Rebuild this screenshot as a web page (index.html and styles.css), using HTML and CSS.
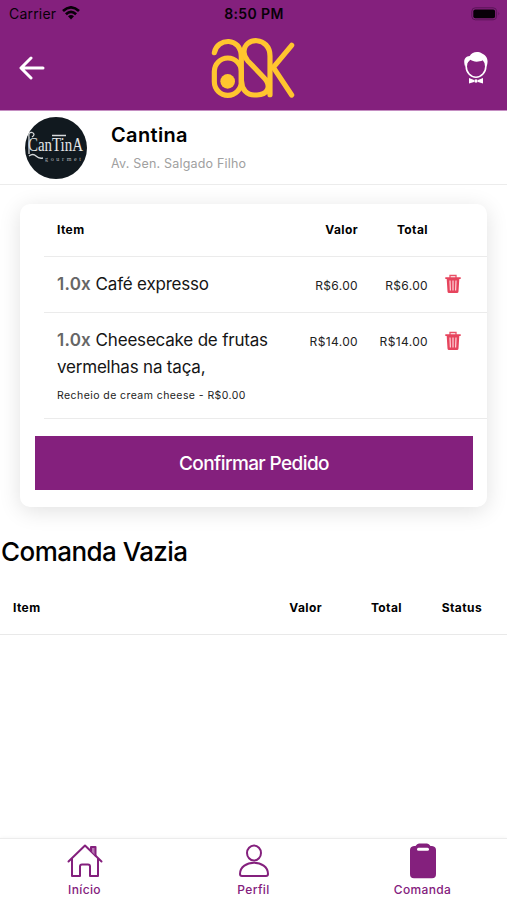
FILE: index.html
```html
<!DOCTYPE html>
<html lang="pt-BR">
<head>
<meta charset="utf-8">
<title>Comanda</title>
<link rel="stylesheet" href="styles.css">
</head>
<body>
<header class="top">
  <div class="status">
    <div class="carrier"><span class="carrier-name">Carrier</span>
      <svg class="wifi" width="18" height="14" viewBox="0 0 18 14"><g fill="none" stroke="#080008" stroke-width="2.7"><path d="M1 5.1Q9-2.3 17 5.1"/><path d="M3.9 8.2Q9 3.500 14.100 8.200"/></g><path d="M6 10.300Q9 7.800 12 10.300L9 13.500Z" fill="#080008"/></svg>
    </div>
    <span class="clock">8:50 PM</span>
    <svg class="battery" width="30" height="14" viewBox="0 0 30 14"><rect x=".8" y=".8" width="24.8" height="12" rx="3.5" fill="none" stroke="#5b1558"/><rect x="2.3" y="2.4" width="21.8" height="8.8" rx="2" fill="#080008"/><path d="M27.5 4.8Q29.2 6.700 27.500 8.600Z" fill="#5b1558"/></svg>
  </div>
  <div class="bar">
    <svg class="back" width="26" height="24" viewBox="0 0 26 24"><path d="M12 2 2 12 12 22M2.500 12H24" fill="none" stroke="#fff" stroke-width="3" stroke-linecap="round" stroke-linejoin="round"/></svg>
    <svg class="logo" width="110" height="75" viewBox="0 0 330 225"><g fill="none" stroke="#ffc52f" stroke-width="15.500" stroke-linecap="round"><path d="M46 68C54 24 127 18 127 82V155"/><rect x="46" y="84" width="81" height="112" rx="40.500"/><path d="M213 194V78C213 19 135 19 135 66C135 78 139 84 146 92L195 143C220 170 204 195 174 195H166C144 195 128 178 128 155"/><path d="M278 46 223 112 278 195" stroke-linejoin="round"/></g><circle cx="86" cy="154" r="22" fill="#ffc52f"/></svg>
    <svg class="waiter" width="26" height="34" viewBox="0 0 26 34"><ellipse cx="13" cy="15.500" rx="9.800" ry="10.700" fill="none" stroke="#fff" stroke-width="1.600"/><path d="M2.200 16C-.2 9 2 5.300 6.700 5 9 .6 15 0 19 2.400 25.200 5 25.500 11 23.400 16 22.700 12 21 10.500 20 9.300 14 11.800 10 10.500 7.500 8.800 4.800 10.800 3.300 13 2.200 16Z" fill="#fff"/><path d="M6 27 11 29V31L6 32.500ZM20 27 15 29V31L20 32.500Z" fill="#fff"/><circle cx="13" cy="30" r="1.800" fill="#fff"/></svg>
  </div>
</header>

<section class="place">
  <svg class="avatar" width="62" height="62" viewBox="0 0 62 62"><circle cx="31" cy="31" r="31" fill="#11191f"/><g fill="#e4e6e7" font-family="Liberation Serif, serif"><text x="3" y="34" font-size="19" textLength="55" lengthAdjust="spacingAndGlyphs">CanTinA</text><text x="20" y="43.500" font-size="6" textLength="36" lengthAdjust="spacing" fill="#b5b9bc">gourmet</text></g><path d="M4 39Q8 36 11 39T18 41M27 18.500H41M4 20Q3 15 7 15.500 11 17 7 20M4 20V37" fill="none" stroke="#d5d8da" stroke-width="1.300"/></svg>
  <div class="place-info">
    <h1 class="place-name">Cantina</h1>
    <p class="place-address">Av. Sen. Salgado Filho</p>
  </div>
</section>

<main>
  <section class="card">
    <div class="row head"><span>Item</span><span class="num">Valor</span><span class="num">Total</span></div>
    <div class="row first">
      <div class="name"><b>1.0x</b> Café expresso</div><span class="num">R$6.00</span><span class="num">R$6.00</span>
      <svg class="trash" width="16" height="20" viewBox="0 0 16 20"><path d="M5 4V1.500H11V4" fill="none" stroke="#e95166" stroke-width="1.300"/><path d="M.3 3.300H15.700V5H14.300L13.500 17.500Q13.400 19 12 19H4Q2.600 19 2.500 17.500L1.700 5H.3Z" fill="#e6445d"/><path d="M5 6.500 5.400 16.500M8 6.500V16.500M11 6.500 10.600 16.500" stroke="#ffd5da" stroke-width="1.200"/></svg>
    </div>
    <div class="row second">
      <div class="name"><b>1.0x</b> Cheesecake de frutas<br>vermelhas na taça,<small class="extra">Recheio de cream cheese - R$0.00</small></div><span class="num">R$14.00</span><span class="num">R$14.00</span>
      <svg class="trash" width="16" height="20" viewBox="0 0 16 20"><path d="M5 4V1.500H11V4" fill="none" stroke="#e95166" stroke-width="1.300"/><path d="M.3 3.300H15.700V5H14.300L13.500 17.500Q13.400 19 12 19H4Q2.600 19 2.500 17.500L1.700 5H.3Z" fill="#e6445d"/><path d="M5 6.500 5.400 16.500M8 6.500V16.500M11 6.500 10.600 16.500" stroke="#ffd5da" stroke-width="1.200"/></svg>
    </div>
    <button class="confirm">Confirmar Pedido</button>
  </section>
  <h2 class="title">Comanda Vazia</h2>
  <div class="tab-head"><span>Item</span><span class="num">Valor</span><span class="num">Total</span><span class="num">Status</span></div>
</main>

<nav class="nav">
  <a class="tab"><svg width="36" height="36" viewBox="0 0 36 36"><g fill="none" stroke="#84207d" stroke-width="2" stroke-linejoin="round" stroke-linecap="round"><path d="M1.500 18.500 18 2.500 34.500 18.500M5 16V33H13V23.500Q13 21.500 15 21.500H21Q23 21.500 23 23.500V33H31V16"/><path d="M24 8V4H28.500V12.500" fill="#b778b3"/></g></svg><span>Início</span></a>
  <a class="tab"><svg width="36" height="36" viewBox="0 0 36 36"><g fill="none" stroke="#84207d" stroke-width="2"><ellipse cx="18" cy="10" rx="7" ry="7.500"/><path d="M4 31C4 16 32 16 32 31Q32 33 30 33H6Q4 33 4 31Z"/></g></svg><span>Perfil</span></a>
  <a class="tab"><svg width="36" height="36" viewBox="0 0 36 36"><path d="M9 3H10.500Q12 .5 14 .5H22Q24 .5 25.500 3H27Q31 3.500 31 7V31Q31 35.300 27 35.300H9Q5 35.300 5 31V7Q5 3.500 9 3Z" fill="#84207d"/><rect x="12" y="4.700" width="12" height="3" rx="1.500" fill="#fff"/></svg><span>Comanda</span></a>
</nav>
</body>
</html>
```

FILE: styles.css
```css
* { box-sizing: border-box; }
body {
  margin: 0;
  width: 507px;
  height: 900px;
  display: flex;
  flex-direction: column;
  overflow: hidden;
  background: #fff;
  color: #000;
  font-family: Inter, "Liberation Sans", sans-serif;
}
h1, h2, p { margin: 0; font-weight: 400; }

.top { height: 111px; background: #84207d; border-bottom: 1px solid #c58ec2; flex: none; }
.status {
  height: 28px;
  padding: 0 6px 0 9px;
  display: grid;
  grid-template-columns: 1fr auto 1fr;
  align-items: center;
  color: #080008;
  font-size: 14px;
  line-height: 28px;
}
.carrier { display: flex; align-items: center; gap: 6px; }
.carrier-name { letter-spacing: .2px; }
.wifi { margin-top: -3px; }
.clock { margin-left: -2px; font-weight: 600; letter-spacing: .4px; }
.battery { justify-self: end; }
.bar { height: 82px; padding: 0 18px; display: grid; grid-template-columns: 1fr 110px 1fr; align-items: start; }
.back { margin: 28px 0 0 .5px; }
.logo { margin: 2px 0 0 .5px; }
.waiter { justify-self: end; margin-top: 23px; }

.place { height: 74px; flex: none; display: flex; padding: 5px 25px; gap: 24px; border-bottom: 1px solid #ececec; }
.avatar { margin-top: 1px; }
.place-name { margin-top: 6px; font-size: 20px; line-height: 27px; height: 26px; font-weight: 600; letter-spacing: .35px; }
.place-address { margin-top: 6px; font-size: 12.5px; line-height: 19px; letter-spacing: .2px; color: #a0a0a0; }

main { flex: 1; }
.card {
  width: 467px;
  height: 303px;
  margin: 19px 0 0 20px;
  padding-left: 24px;
  border-radius: 10px;
  background: #fff;
  box-shadow: 0 4px 22px rgba(0, 0, 0, .12);
}
.row {
  display: grid;
  grid-template-columns: 231px 70px 70px 33px;
  padding-left: 13px;
  border-bottom: 1px solid #ebebeb;
  align-items: start;
}
.num { text-align: right; }
.head { height: 53px; padding-top: 17px; font-size: 12px; line-height: 18px; font-weight: 700; letter-spacing: .4px; }
.first { height: 56px; }
.second { height: 106px; }
.name { padding-top: 14px; font-size: 17px; line-height: 27px; letter-spacing: -.2px; white-space: nowrap; color: #151515; }
.name b { color: #666; font-weight: 600; letter-spacing: .25px; }
.row:not(.head) .num { padding-top: 20px; font-size: 12px; line-height: 18px; letter-spacing: .35px; color: #222; }
.extra { display: block; margin-top: 7px; font-size: 10.5px; line-height: 16px; letter-spacing: .43px; color: #222; }
.trash { justify-self: end; margin-top: 17px; }
.row.second .trash { margin-top: 18px; }
.confirm {
  display: block;
  width: 438px;
  height: 54px;
  margin: 17px 0 0 -9px;
  padding: 0;
  border: 0;
  background: #84207d;
  color: #fff;
  font: 500 19px/56px Inter, sans-serif;
  letter-spacing: -.6px;
}
.title { margin: 27px 0 0 1px; font-size: 26px; line-height: 36px; height: 36px; letter-spacing: -.55px; font-weight: 450; }
.tab-head {
  display: grid;
  grid-template-columns: 239px 70px 80px 80px;
  height: 65px;
  padding: 29px 0 0 13px;
  border-bottom: 1px solid #e9e9e9;
  font-size: 12px;
  line-height: 18px;
  font-weight: 700;
  letter-spacing: .4px;
}

.nav { height: 62px; flex: none; display: grid; grid-template-columns: repeat(3, 1fr); border-top: 1px solid #ececec; box-shadow: 0 -1px 3px rgba(0, 0, 0, .03); }
.tab { display: flex; flex-direction: column; align-items: center; padding-top: 4px; color: #84207d; font-size: 12px; line-height: 16px; font-weight: 500; letter-spacing: .35px; }
.tab span { margin-top: 3px; }
```
